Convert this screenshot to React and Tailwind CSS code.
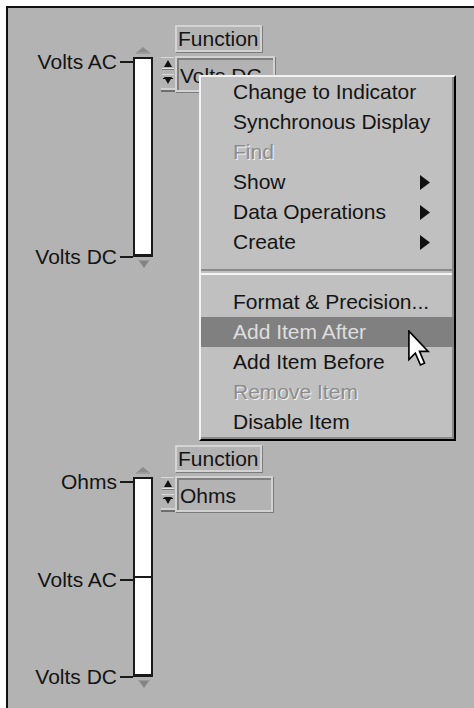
import React from 'react';

// Small gray arrow above the slider track
function TopArrow() {
  return (
    <svg width="20" height="7" viewBox="0 0 20 7">
      <polygon points="10,0 4,5 16,5" fill="#8c8c8c" />
      <rect x="3" y="5" width="14" height="2" fill="#9c9c9c" />
    </svg>
  );
}

// Small gray arrow below the slider track
function BottomArrow() {
  return (
    <svg width="20" height="9" viewBox="0 0 20 9">
      <rect x="5" y="0" width="12" height="1" fill="#9a9a9a" />
      <polygon points="6,1 16,1 11,8" fill="#858585" />
    </svg>
  );
}

// Up / down buttons of the ring control
function Spinner() {
  return (
    <svg width="15" height="37" viewBox="0 0 15 37">
      <rect x="0" y="0" width="15" height="37" fill="#b3b3b3" />
      <rect x="1" y="1" width="13" height="1" fill="#d8d8d8" />
      <polygon points="4,11 12,11 8,4" fill="#111" />
      <rect x="2" y="12" width="12" height="1" fill="#e2e2e2" />
      <rect x="2" y="13" width="12" height="1" fill="#7a7a7a" />
      <rect x="2" y="18" width="12" height="1" fill="#dadada" />
      <polygon points="4,21 12,21 8,28" fill="#111" />
      <rect x="3" y="22" width="10" height="1" fill="#111" />
      <rect x="1" y="32" width="14" height="2" fill="#d0d0d0" />
      <rect x="1" y="34" width="14" height="2" fill="#6e6e6e" />
    </svg>
  );
}

function Tick({ label }) {
  return (
    <div className="flex h-[22px] items-center">
      <span className="whitespace-nowrap leading-[22px]">{label}</span>
      <span className="ml-[3px] h-[2px] w-[13px] bg-[#1a1a1a]" />
    </div>
  );
}

// One slider group: labels, track, Function label and ring control
function SliderGroup({ labels, value, middleLine, fieldWidth }) {
  return (
    <div className="flex items-start">
      <div className="w-[125px] pt-[26px]">
        <div className="flex h-[217px] flex-col items-end justify-between">
          {labels.map((l) => (
            <Tick key={l} label={l} />
          ))}
        </div>
      </div>
      <div className="flex w-[20px] flex-col items-center pt-[22px]">
        <TopArrow />
        <div className="mt-[3px] flex h-[200px] w-[20px] flex-col border-x-2 border-t-2 border-b-[3px] border-[#1a1a1a] bg-white">
          {middleLine && <div className="mt-[97px] h-[2px] w-full bg-[#1a1a1a]" />}
        </div>
        <div className="mt-[3px]">
          <BottomArrow />
        </div>
      </div>
      <div className="ml-[7px] flex flex-col">
        <div className="ml-[15px] flex h-[27px] w-[87px] items-center border-2 border-[#d4d4d4] pl-[1px] leading-none shadow-[1px_1px_0_#7c7c7c]">
          Function
        </div>
        <div className="mt-[4px] flex">
          <Spinner />
          <div
            className="h-[36px] border-2 border-[#d2d2d2] shadow-[1px_1px_0_#7c7c7c]"
            style={{ width: fieldWidth }}
          >
            <div className="flex h-full items-center whitespace-nowrap border-l-2 border-t-2 border-[#808080] pl-[1px] leading-none">
              {value}
            </div>
          </div>
        </div>
      </div>
    </div>
  );
}

const menuTop = [
  { text: 'Change to Indicator' },
  { text: 'Synchronous Display' },
  { text: 'Find', disabled: true },
  { text: 'Show', sub: true },
  { text: 'Data Operations', sub: true },
  { text: 'Create', sub: true },
];

const menuBottom = [
  { text: 'Format & Precision...' },
  { text: 'Add Item After', active: true },
  { text: 'Add Item Before' },
  { text: 'Remove Item', disabled: true },
  { text: 'Disable Item' },
];

function MenuItem({ item }) {
  let cls = 'text-[#141414]';
  if (item.disabled) cls = 'text-[#8c8c8c] [text-shadow:1px_1px_0_#f4f4f4]';
  if (item.active) cls = 'bg-[#808080] text-[#dedede]';
  return (
    <div className={`flex h-[30px] items-center justify-between whitespace-nowrap pl-[32px] pr-[24px] ${cls}`}>
      <span>{item.text}</span>
      {item.sub && (
        <svg width="10" height="15" viewBox="0 0 10 15">
          <polygon points="0,0 10,7.5 0,15" fill="#111" />
        </svg>
      )}
    </div>
  );
}

function ContextMenu() {
  return (
    <div className="absolute left-[191px] top-[67px] w-[257px] border-2 border-b-black border-l-[#f2f2f2] border-r-black border-t-[#f2f2f2] bg-[#c0c0c0] shadow-[inset_-2px_-2px_0_#8a8a8a]">
      {menuTop.map((m) => (
        <MenuItem key={m.text} item={m} />
      ))}
      <div className="flex h-[30px] flex-col justify-center gap-[2px] pr-[2px]">
        <div className="h-[2px] bg-[#8a8a8a]" />
        <div className="h-[2px] bg-[#f4f4f4]" />
      </div>
      {menuBottom.map((m) => (
        <MenuItem key={m.text} item={m} />
      ))}
      <div className="h-[2px]" />
    </div>
  );
}

function Cursor() {
  return (
    <svg
      className="absolute left-[400px] top-[322px]"
      width="22"
      height="37"
      viewBox="0 0 12 20"
    >
      <path
        d="M0.5 0.5 L0.5 16 L4 12.5 L6.8 19 L9 18 L6.3 11.6 L11 11.6 Z"
        fill="#fff"
        stroke="#000"
        strokeWidth="0.9"
        strokeLinejoin="miter"
      />
    </svg>
  );
}

export default function App() {
  return (
    <div className="h-[708px] w-[474px] overflow-hidden bg-white pl-[6px] pt-[6px] font-['Liberation_Sans',Arial,sans-serif] text-[21px] text-[#141414]">
      <div className="relative h-full w-full border-l-2 border-t-2 border-[#111] bg-[#b3b3b3] pt-[17px]">
        <div className="h-[420px]">
          <SliderGroup labels={['Volts AC', 'Volts DC']} value="Volts DC" fieldWidth={100} />
        </div>
        <SliderGroup
          labels={['Ohms', 'Volts AC', 'Volts DC']}
          value="Ohms"
          middleLine
          fieldWidth={98}
        />
        <ContextMenu />
        <Cursor />
      </div>
    </div>
  );
}
